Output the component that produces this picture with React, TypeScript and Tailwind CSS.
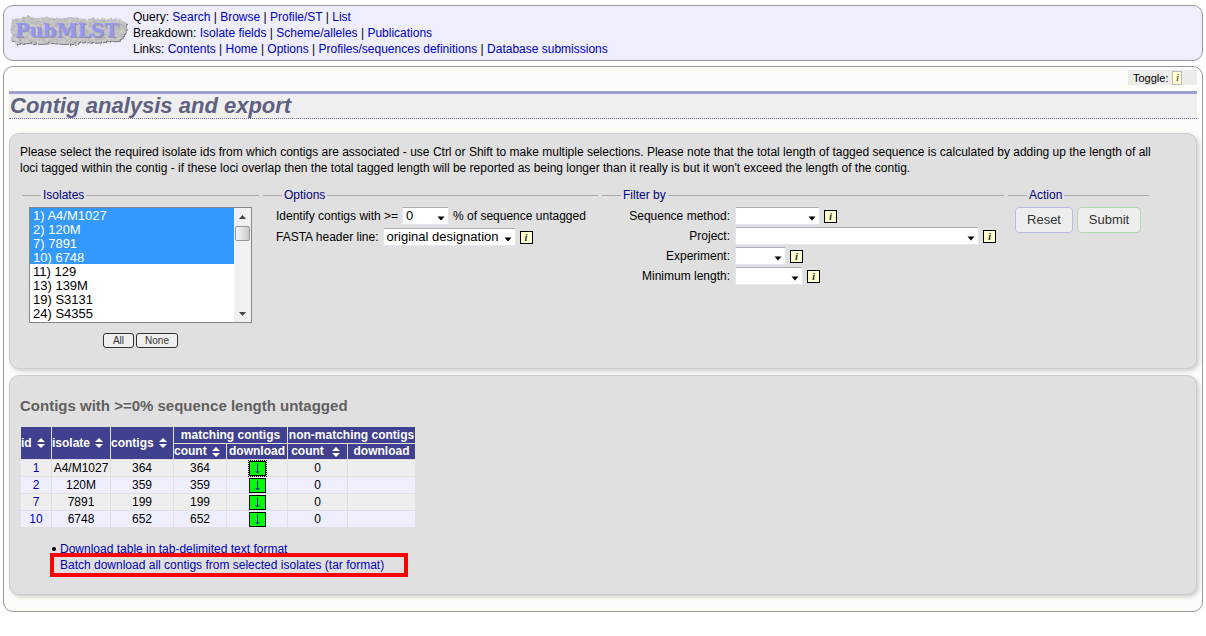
import React from "react";

const HEADER_ROWS = [
  { label: "Query:", links: ["Search", "Browse", "Profile/ST", "List"] },
  { label: "Breakdown:", links: ["Isolate fields", "Scheme/alleles", "Publications"] },
  {
    label: "Links:",
    links: ["Contents", "Home", "Options", "Profiles/sequences definitions", "Database submissions"],
  },
];

const ISOLATES = [
  "1) A4/M1027",
  "2) 120M",
  "7) 7891",
  "10) 6748",
  "11) 129",
  "13) 139M",
  "19) S3131",
  "24) S4355",
];

const ROWS = [
  { id: 1, isolate: "A4/M1027", contigs: 364, matching: 364, other: 0 },
  { id: 2, isolate: "120M", contigs: 359, matching: 359, other: 0 },
  { id: 7, isolate: "7891", contigs: 199, matching: 199, other: 0 },
  { id: 10, isolate: "6748", contigs: 652, matching: 652, other: 0 },
];

function Logo() {
  return (
    <svg width="120" height="34" viewBox="0 0 120 34" role="img" aria-label="PubMLST" className="shrink-0">
      <defs>
        <filter id="stone" x="-5%" y="-10%" width="110%" height="125%" colorInterpolationFilters="sRGB">
          <feTurbulence type="fractalNoise" baseFrequency="0.3" numOctaves="2" seed="4" result="noise" />
          <feDisplacementMap
            in="SourceGraphic"
            in2="noise"
            scale="4"
            xChannelSelector="R"
            yChannelSelector="G"
            result="rough"
          />
          <feColorMatrix
            in="noise"
            type="matrix"
            values="0.2 0 0 0 0.66  0.2 0 0 0 0.66  0.2 0 0 0 0.66  0 0 0 0 1"
            result="grain"
          />
          <feComposite in="grain" in2="rough" operator="in" result="body" />
          <feDropShadow in="body" dx="1" dy="1" stdDeviation="0.4" floodColor="#666" floodOpacity="0.8" />
        </filter>
      </defs>
      <path
        filter="url(#stone)"
        fill="#bdbdbd"
        d="M3 5 L12 4 L19 2 L26 4 L38 3 L50 5 L61 3 L75 5 L87 4 L99 5 L109 5 L118 9 L118 14 L114 24 L110 27 L96 28 L84 29 L75 28 L63 30 L53 30 L42 29 L33 30 L20 29 L7 30 L2 27 L3 21 L1 16 L2 10 Z"
      />
      <g fontFamily="'DejaVu Serif', serif" fontWeight="bold" fontSize="19">
        <text x="7" y="24" fill="#9a94a4" aria-hidden="true">PubMLST</text>
        <text x="6" y="23" fill="#9696f4">PubMLST</text>
      </g>
    </svg>
  );
}

function Info() {
  return (
    <a
      href="#info"
      aria-label="More information"
      className="flex h-[13px] w-[13px] shrink-0 items-center justify-center border border-black bg-[#ffffd0] font-['Liberation_Serif',serif] text-[11px] leading-none font-bold text-[#333] italic"
    >
      i
    </a>
  );
}

type DropProps = { id: string; width: string; options: string[] };

function Drop({ id, width, options }: DropProps) {
  return (
    <div className={`relative h-[18px] ${width}`}>
      <select
        id={id}
        className="block h-full w-full appearance-none rounded-[2px] border border-[#e3e6ee] border-t-[#abadb3] bg-white pl-[3px] text-[13px] leading-4 text-black"
      >
        {options.map((o) => (
          <option key={o}>{o}</option>
        ))}
      </select>
      <svg className="pointer-events-none absolute right-1 bottom-1" width="8" height="5" viewBox="0 0 8 5">
        <path d="M0.500 0.500h7L4 4.500z" fill="#000" />
      </svg>
    </div>
  );
}

type GroupProps = { title: string; width: string; padding: string; children: React.ReactNode };

function Group({ title, width, padding, children }: GroupProps) {
  return (
    <fieldset className={`border-t border-[#aaa] ${width}`}>
      <legend className="ml-[19px] px-[2px] leading-4 text-[#000080]">{title}</legend>
      <div className={`pt-1 ${padding}`}>{children}</div>
    </fieldset>
  );
}

function Sortable({ children }: { children: string }) {
  return (
    <button type="button" className="flex w-full items-center font-bold">
      <span className="flex-1 text-center">{children}</span>
      <span className="flex w-5 shrink-0 pl-[5px]">
        <svg width="8" height="10" viewBox="0 0 8 10" aria-hidden="true">
          <path d="M4 0L8 4H0zM4 10L0 6H8z" fill="#fff" />
        </svg>
      </span>
    </button>
  );
}

const FILTERS = [
  { id: "method", label: "Sequence method:", width: "w-[85px]" },
  { id: "project", label: "Project:", width: "w-[244px]" },
  { id: "experiment", label: "Experiment:", width: "w-[51px]" },
  { id: "length", label: "Minimum length:", width: "w-[68px]" },
];

const PANEL = "rounded-[10px] border border-[#ccc] bg-[#e0e0e0] px-[10px] shadow-[2px_2px_4px_#ccc]";
const TH = "bg-[#404090] p-0";
const TD = "h-4 p-0";

export default function App() {
  return (
    <div className="bg-white px-[3px] pt-[5px] pb-6 font-['Liberation_Sans',Arial,sans-serif] text-[12px] leading-4 text-black">
      <header className="flex rounded-[10px] border border-[#999] bg-[#eeeeff] py-[3px] pl-[5px]">
        <div className="mr-1 flex items-start pt-[5px]">
          <Logo />
        </div>
        <nav>
          {HEADER_ROWS.map((row) => (
            <div key={row.label}>
              {row.label}{" "}
              {row.links.map((link, i) => (
                <React.Fragment key={link}>
                  {i > 0 && " | "}
                  <a href="#nav" className="text-[#0000bb]">{link}</a>
                </React.Fragment>
              ))}
            </div>
          ))}
        </nav>
      </header>

      <main className="mt-[5px] rounded-[10px] border border-[#999] bg-[#fcfdf8] px-[5px] pt-[3px] pb-4">
        <div className="flex justify-end">
          <div className="flex h-[15px] w-[69px] items-center gap-1 bg-[#ececea] pl-[5px] text-[11px]">
            Toggle:
            <button
              type="button"
              aria-label="Toggle tooltips"
              className="flex h-[14px] w-[10px] items-center justify-center border border-[#bbb] bg-[#ffffd0] font-['Liberation_Serif',serif] text-[11px] leading-none text-[#333] italic"
            >
              i
            </button>
          </div>
        </div>
        <h1 className="mt-[6px] border-t-[3px] border-b border-t-[#a0a0d0] border-b-[#7070b8] bg-[#efefef] pl-px text-[22px] leading-6 font-bold text-[#606080] italic [border-bottom-style:dotted]">
          Contig analysis and export
        </h1>

        <section className={`mt-[14px] pt-[10px] pb-5 ${PANEL}`}>
          <p className="pr-4">
            Please select the required isolate ids from which contigs are associated - use Ctrl or Shift to make
            multiple selections. Please note that the total length of tagged sequence is calculated by adding up the
            length of all loci tagged within the contig - if these loci overlap then the total tagged length will be
            reported as being longer than it really is but it won't exceed the length of the contig.
          </p>
          <form className="mt-[11px] flex flex-wrap items-start gap-1 pl-[2px]" onSubmit={(e) => e.preventDefault()}>
            <Group title="Isolates" width="w-[237px]" padding="px-[7px]">
              <div className="flex border border-[#828790] bg-white">
                <select
                  multiple
                  size={8}
                  aria-label="Isolates"
                  defaultValue={ISOLATES.slice(0, 4)}
                  className="block h-[114px] min-w-0 flex-1 overflow-hidden text-[13px] [scrollbar-width:none]"
                >
                  {ISOLATES.map((name) => (
                    <option
                      key={name}
                      value={name}
                      className="h-[14px] min-h-0 p-0 pl-[3px] leading-[14px] checked:bg-[linear-gradient(#3399ff,#3399ff)] checked:text-white"
                    >
                      {name}
                    </option>
                  ))}
                </select>
                <svg width="17" height="114" viewBox="0 0 17 114" aria-hidden="true">
                  <defs>
                    <linearGradient id="thumb">
                      <stop offset="0" stopColor="#f8f8f8" />
                      <stop offset="1" stopColor="#c8c8cc" />
                    </linearGradient>
                  </defs>
                  <rect width="17" height="114" fill="#f0f0f0" />
                  <path d="M5 11L8.500 7L12 11z" fill="#444" />
                  <path d="M5 104L8.500 108L12 104z" fill="#444" />
                  <rect x="1.500" y="18.500" width="14" height="14" rx="1.500" fill="url(#thumb)" stroke="#979797" />
                </svg>
              </div>
              <div className="mt-[10px] flex justify-center gap-[2px] text-[10px] leading-[13px] text-[#333]">
                <button type="button" className="w-[31px] rounded-[3px] border border-[#333] bg-[#efefef]">All</button>
                <button type="button" className="w-[42px] rounded-[3px] border border-[#333] bg-[#efefef]">None</button>
              </div>
            </Group>

            <Group title="Options" width="w-[335px]" padding="pl-[13px]">
              <div className="flex flex-col gap-[3px]">
                <div className="flex items-center gap-1">
                  <label htmlFor="untagged">Identify contigs with &gt;=</label>
                  <Drop id="untagged" width="w-[47px]" options={["0"]} />
                  <span>% of sequence untagged</span>
                </div>
                <div className="flex items-center gap-1">
                  <label htmlFor="fasta">FASTA header line:</label>
                  <Drop id="fasta" width="w-[133px]" options={["original designation"]} />
                  <Info />
                </div>
              </div>
            </Group>

            <Group title="Filter by" width="w-[402px]" padding="pl-0">
              <div className="flex flex-col gap-[2px]">
                {FILTERS.map((f) => (
                  <div key={f.id} className="flex items-center gap-1">
                    <label htmlFor={f.id} className="w-[129px] pr-px text-right">{f.label}</label>
                    <Drop id={f.id} width={f.width} options={[""]} />
                    <Info />
                  </div>
                ))}
              </div>
            </Group>

            <Group title="Action" width="w-[141px]" padding="px-[7px]">
              <div className="flex gap-1 text-[13px] leading-6 text-[#333]">
                <button type="reset" className="w-[58px] rounded-[4px] border border-[#bbbbee] bg-[#eee]">Reset</button>
                <button type="submit" className="w-[64px] rounded-[4px] border border-[#aaddaa] bg-[#eee]">Submit</button>
              </div>
            </Group>
          </form>
        </section>

        <section className={`mt-[6px] pt-[22px] pb-[21px] ${PANEL}`}>
          <h2 className="text-[15px] leading-4 font-bold text-[#606060]">Contigs with &gt;=0% sequence length untagged</h2>
          <table className="mt-3 w-[396px] table-fixed border-separate border-spacing-px text-center">
            <colgroup>
              <col className="w-[30px]" />
              <col className="w-[58px]" />
              <col className="w-[62px]" />
              <col className="w-[52px]" />
              <col className="w-[60px]" />
              <col className="w-[59px]" />
              <col className="w-[67px]" />
            </colgroup>
            <thead className="leading-[15px] whitespace-nowrap text-white">
              <tr className="leading-4">
                <th rowSpan={2} className={TH}><Sortable>id</Sortable></th>
                <th rowSpan={2} className={TH}><Sortable>isolate</Sortable></th>
                <th rowSpan={2} className={TH}><Sortable>contigs</Sortable></th>
                <th colSpan={2} className={TH}>matching contigs</th>
                <th colSpan={2} className={TH}>non-matching contigs</th>
              </tr>
              <tr>
                <th className={TH}><Sortable>count</Sortable></th>
                <th className={TH}>download</th>
                <th className={TH}><Sortable>count</Sortable></th>
                <th className={TH}>download</th>
              </tr>
            </thead>
            <tbody>
              {ROWS.map((r, i) => (
                <tr key={r.id} className="odd:bg-[#eeeeee] even:bg-[#eeeeff]">
                  <td className={TD}><a href="#isolate" className="text-[#0000bb]">{r.id}</a></td>
                  <td className={TD}>{r.isolate}</td>
                  <td className={TD}>{r.contigs}</td>
                  <td className={TD}>{r.matching}</td>
                  <td className={TD}>
                    <a
                      href="#download"
                      aria-label={`Download contigs for isolate ${r.id}`}
                      className={`mx-auto flex h-[15px] w-[17px] items-center justify-center border border-black bg-[#00ff00] ${
                        i === 0 ? "outline-1 outline-black outline-dotted" : ""
                      }`}
                    >
                      <svg width="5" height="11" viewBox="0 0 5 11">
                        <path d="M2.500 0.500V10M0.500 8L2.500 10L4.500 8" fill="none" stroke="#1515aa" />
                      </svg>
                    </a>
                  </td>
                  <td className={TD}>{r.other}</td>
                  <td className={TD}></td>
                </tr>
              ))}
            </tbody>
          </table>
          <ul className="mt-[13px] pl-10">
            <li className="relative">
              <svg className="absolute top-[6px] -left-2" width="4" height="4" viewBox="0 0 4 4">
                <circle cx="2" cy="2" r="2" />
              </svg>
              <a href="#table" className="text-[#0000bb]">Download table in tab-delimited text format</a>
            </li>
            <li className="relative w-fit">
              <a href="#batch" className="text-[#0000bb]">Batch download all contigs from selected isolates (tar format)</a>
              <span className="pointer-events-none absolute -top-1 -right-6 -bottom-1 -left-[10px] border-4 border-[#ff0000]" />
            </li>
          </ul>
        </section>
      </main>
    </div>
  );
}
